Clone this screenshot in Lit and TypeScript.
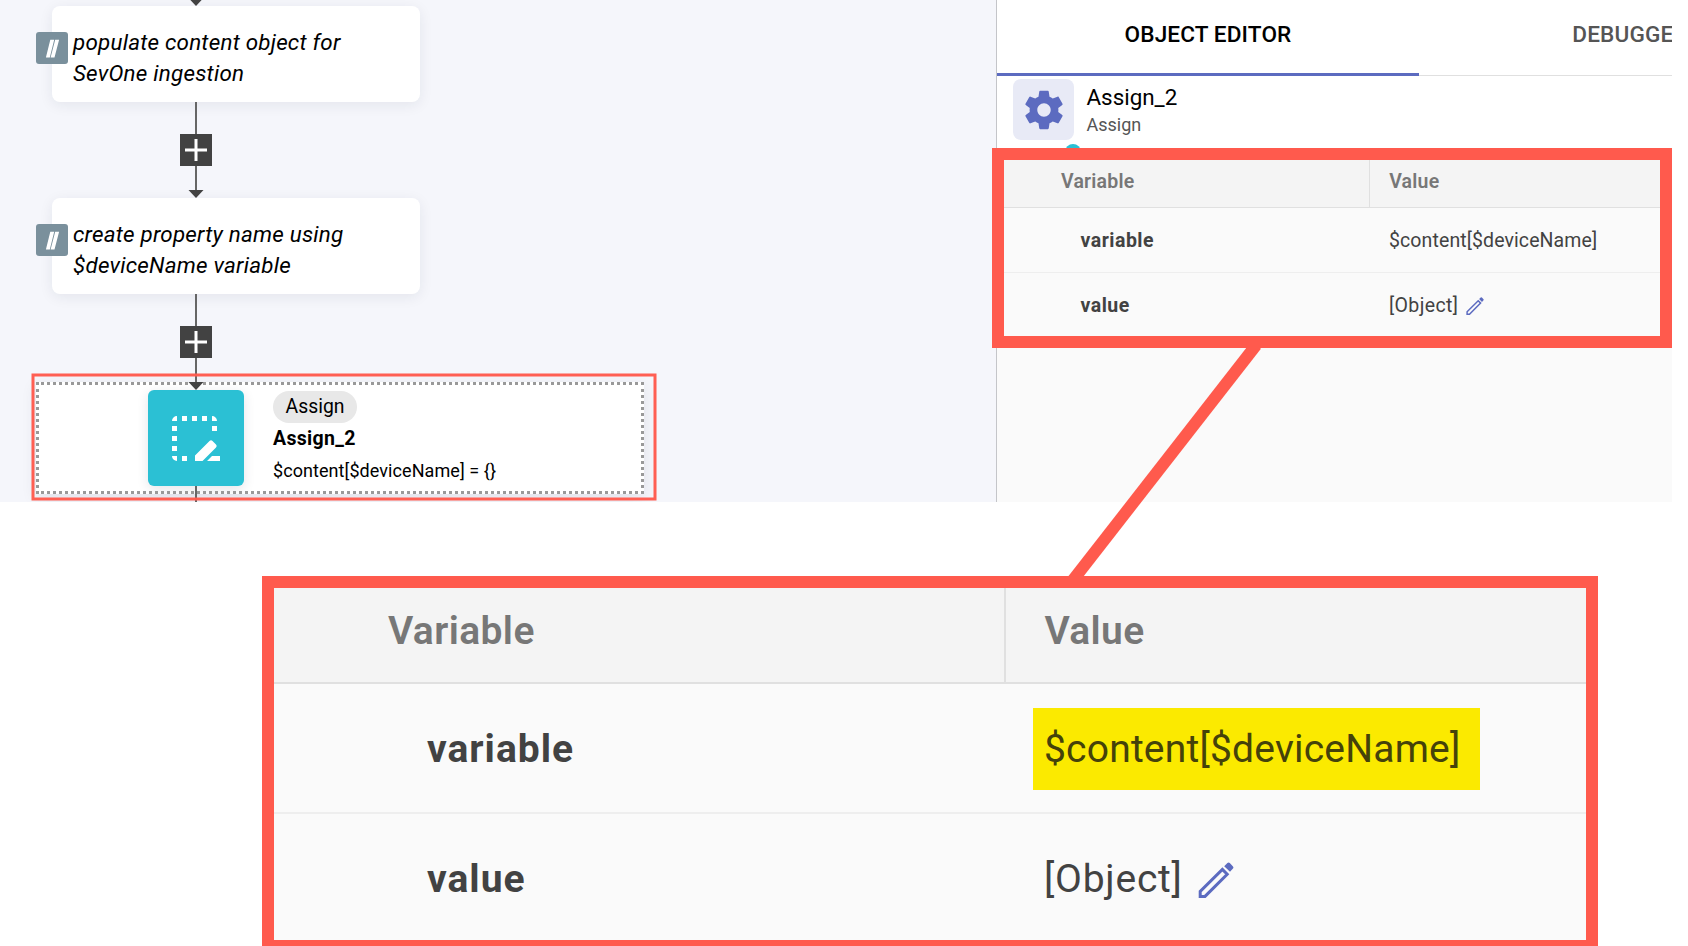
import { LitElement, html, css, svg } from "lit";
import { customElement, property } from "lit/decorators.js";

@customElement("value-table")
class ValueTable extends LitElement {
  @property({ type: Boolean }) marked = false;

  static styles = css`
    :host {
      display: block;
      --u: 1px;
      background: #fafafa;
      color: #424242;
      font: 400 calc(19.5 * var(--u)) / 1 Roboto, sans-serif;
    }
    .row {
      display: grid;
      grid-template-columns: calc(365 * var(--u)) 1fr;
      box-sizing: border-box;
      height: calc(65 * var(--u));
      border-bottom: var(--u) solid #eeeeee;
      align-items: center;
      padding-top: calc(1.2 * var(--u));
    }
    .row:last-child { height: calc(63 * var(--u)); border-bottom: 0; align-items: start; padding-top: calc(23 * var(--u)); }
    .head {
      height: calc(48 * var(--u));
      background: #f4f4f4;
      border-bottom-color: #e0e0e0;
      color: #777;
      font-weight: 600;
      letter-spacing: calc(0.2 * var(--u));
      align-items: stretch;
      padding-top: 0;
    }
    .head > span { padding-top: calc(12 * var(--u)); }
    .head .key { padding-left: calc(57 * var(--u)); }
    .head .val { border-left: var(--u) solid #e0e0e0; }
    .key { padding-left: calc(76.5 * var(--u)); }
    .name { font-weight: 700; letter-spacing: calc(0.5 * var(--u)); }
    .val { padding-left: calc(19.2 * var(--u)); display: flex; align-items: center; }
    .row:not(.head) .val { padding-left: calc(20 * var(--u)); }
    .head .val { align-items: flex-start; }
    .txt { position: relative; white-space: nowrap; letter-spacing: calc(0.1 * var(--u)); }
    .obj { letter-spacing: calc(0.38 * var(--u)); }
    .mark::before {
      content: "";
      position: absolute;
      left: -11px;
      top: -22px;
      width: 447px;
      height: 82px;
      background: #fbea00;
      z-index: -1;
    }
    .mark { z-index: 0; color: #45420a; }
    svg {
      flex: none;
      width: calc(18 * var(--u));
      height: calc(18 * var(--u));
      margin-left: calc(7.5 * var(--u));
    }
  `;

  render() {
    return html`
      <div class="row head"><span class="key">Variable</span><span class="val">Value</span></div>
      <div class="row">
        <span class="key name">variable</span>
        <span class="val"><span class="txt ${this.marked ? "mark" : ""}">$content[$deviceName]</span></span>
      </div>
      <div class="row">
        <span class="key name">value</span>
        <span class="val"><span class="txt obj">[Object]</span>
          <svg viewBox="0 0 18 18">
            <path d="M1.100 17.200V14.700L12.200 3.700L14.600 6.100L3.500 17.200z" fill="none" stroke="#5c6bc0" stroke-width="1.500"/>
            <path d="M13.100 2.100L14.700 .5Q15.300 0 15.900 .5L17.500 2.200Q18 2.800 17.500 3.300L16 4.900z" fill="#5c6bc0"/>
          </svg>
        </span>
      </div>`;
  }
}

@customElement("object-editor")
class ObjectEditor extends LitElement {
  static styles = css`
    :host {
      display: flex;
      flex-direction: column;
      box-sizing: border-box;
      width: 676px;
      height: 502px;
      overflow: hidden;
      border-left: 1px solid #c4c5c9;
      background: #fafafa;
      font-family: Roboto, sans-serif;
    }
    .tabs { display: flex; background: #fff; box-shadow: inset 0 -1px #e0e0e0; flex: none; }
    .tab {
      flex: none;
      box-sizing: border-box;
      width: 422px;
      height: 76px;
      padding-top: 22px;
      text-align: center;
      font-weight: 500;
      font-size: 22.6px;
      line-height: 26px;
      letter-spacing: 0.12px;
      color: #555;
    }
    .on { color: #000; border-bottom: 3px solid #5c6bc0; }
    .info { display: flex; flex: none; height: 84px; background: #fff; padding: 3px 0 0 16px; box-sizing: border-box; position: relative; }
    .gear { width: 61px; height: 61px; border-radius: 8px; background: #e8eaf6; display: grid; place-items: center; padding: 1px 0 0 1px; box-sizing: border-box; }
    .gear svg { width: 46px; height: 46px; fill: #5c6bc0; }
    .names { padding: 4px 0 0 12.5px; }
    .title { font-size: 22.4px; line-height: 28px; color: #000; }
    .sub { font-size: 18px; line-height: 28px; color: #555; }
    .dot { position: absolute; left: 68px; top: 68px; width: 16px; height: 16px; border-radius: 50%; background: #2bc0d4; }
    value-table { width: 663px; padding-left: 7px; }
  `;

  render() {
    return html`
      <div class="tabs"><div class="tab on">OBJECT EDITOR</div><div class="tab">DEBUGGER</div></div>
      <div class="info">
        <div class="gear">
          <svg viewBox="0 0 24 24"><path d="M19.43 12.98c.04-.32.07-.64.07-.98s-.03-.66-.07-.98l2.11-1.65c.19-.15.24-.42.12-.64l-2-3.46c-.12-.22-.39-.3-.61-.22l-2.49 1c-.52-.4-1.08-.73-1.69-.98l-.38-2.65C14.46 2.18 14.25 2 14 2h-4c-.25 0-.46.18-.49.42l-.38 2.65c-.61.25-1.17.59-1.69.98l-2.49-1c-.23-.09-.49 0-.61.22l-2 3.46c-.13.22-.07.49.12.64l2.11 1.65c-.04.32-.07.65-.07.98s.03.66.07.98l-2.11 1.65c-.19.15-.24.42-.12.64l2 3.46c.12.22.39.3.61.22l2.49-1c.52.4 1.08.73 1.69.98l.38 2.65c.03.24.24.42.49.42h4c.25 0 .46-.18.49-.42l.38-2.65c.61-.25 1.17-.59 1.69-.98l2.49 1c.23.09.49 0 .61-.22l2-3.46c.12-.22.07-.49-.12-.64l-2.11-1.65zM12 15.5c-1.93 0-3.5-1.57-3.5-3.5s1.57-3.5 3.5-3.5 3.5 1.57 3.5 3.5-1.57 3.5-3.5 3.5z"/></svg>
        </div>
        <div class="names"><div class="title">Assign_2</div><div class="sub">Assign</div></div>
        <i class="dot"></i>
      </div>
      <value-table></value-table>`;
  }
}

@customElement("flow-canvas")
class FlowCanvas extends LitElement {
  static styles = css`
    :host { display: block; position: relative; width: 996px; height: 502px; overflow: hidden; background: #f5f6fb; font-family: Roboto, sans-serif; color: #000; }
    .links { position: absolute; inset: 0; }
    .note {
      position: absolute; left: 52px; width: 368px; height: 96px; box-sizing: border-box;
      padding: 21px 60px 0 21px; background: #fff; border-radius: 8px;
      box-shadow: 0 3px 14px rgba(30, 40, 70, 0.08);
      font-size: 22.4px; line-height: 31px; font-style: italic; letter-spacing: 0.22px;
    }
    .n1 { top: 6px; }
    .n2 { top: 198px; }
    .tag { position: absolute; left: -16px; top: 26px; width: 32px; height: 32px; border-radius: 3px; background: #7a909c; }
    .sel { position: absolute; left: 36px; top: 382px; width: 608px; height: 112px; background: #fff; box-shadow: 0 4px 14px rgba(30, 40, 70, 0.1); }
    .tile { position: absolute; left: 148px; top: 390px; width: 96px; height: 96px; border-radius: 6px; background: #2bc0d4; box-shadow: 0 3px 12px rgba(30, 40, 70, 0.12); }
    .desc { position: absolute; left: 273px; top: 391px; }
    .pill { display: block; width: max-content; height: 32px; line-height: 32px; border-radius: 16px; background: #e8e8e8; padding: 0 12.5px; font-size: 19.4px; }
    .name { font-weight: 700; font-size: 19.5px; line-height: 32px; letter-spacing: 0.32px; }
    .expr { font-size: 18px; line-height: 31px; letter-spacing: 0.07px; }
  `;

  render() {
    const plus = (y: number) => svg`
      <rect x="180" y=${y} width="32" height="32" fill="#424242"/>
      <path d="M196 ${y + 5}v22M185 ${y + 16}h22" stroke="#fff" stroke-width="3"/>`;
    const tag = html`<svg class="tag" viewBox="0 0 32 32"><path d="M14.300 7.700H18.200L13.800 25.500H9.900zM19.200 7.700H23.100L18.500 25.500H14.600z" fill="#fff"/></svg>`;
    return html`
      <div class="note n1">${tag}populate content object for<br />SevOne ingestion</div>
      <div class="note n2">${tag}create property name using<br />$deviceName variable</div>
      <div class="sel"></div>
      <div class="tile"></div>
      <div class="desc">
        <div class="pill">Assign</div>
        <div class="name">Assign_2</div>
        <div class="expr">$content[$deviceName] = {}</div>
      </div>
      <svg class="links" width="996" height="502">
        <g stroke="#999" stroke-width="3" stroke-dasharray="3 3">
          <path d="M41 383.5H644M41 492.5H644M37.5 389V494M642.5 389V494M36 383.5h3M36 492.5h3"/>
        </g>
        <path d="M196 102V190M196 294V382M196 486V502" stroke="#666" stroke-width="2"/>
        <path d="M188.500 190h15l-7.500 8zM188.500 382h15l-7.500 8zM188.500 -2h15l-7.500 8z" fill="#424242"/>
        ${plus(134)}${plus(326)}
        <g fill="#fff">
          <path d="M172 421a5 5 0 0 1 5-5v5zM182 416h5v5h-5zM192 416h5v5h-5zM202 416h5v5h-5zM212 416a5 5 0 0 1 5 5h-5zM172 426h5v5h-5zM212 426h5v5h-5zM172 436h5v5h-5zM172 446h5v5h-5zM172 456h5v5a5 5 0 0 1-5-5zM182 456h5v5h-5z"/>
          <path d="M195 461v-5.500l14.500-14.500q1.500-1.500 3 0l3.500 3.500q1.500 1.500 0 3l-13.500 13.500zM207 461l5-5h8v5z"/>
        </g>
        <rect x="33" y="375" width="622" height="124" fill="none" stroke="#ff5a4d" stroke-opacity=".97" stroke-width="3"/>
      </svg>`;
  }
}

@customElement("app-root")
class AppRoot extends LitElement {
  static styles = css`
    :host { display: block; position: relative; width: 1688px; height: 946px; overflow: hidden; background: #fff; }
    .top { display: flex; }
    .marks { position: absolute; inset: 0; }
    .zoomed { box-sizing: border-box; width: 1336px; height: 376px; margin: 74px 0 0 262px; border: 12px solid #ff5a4d; }
    .zoomed value-table { --u: 2px; }
  `;

  render() {
    return html`
      <div class="top"><flow-canvas></flow-canvas><object-editor></object-editor></div>
      <div class="zoomed"><value-table marked></value-table></div>
      <svg class="marks" width="1688" height="946" fill="none" stroke="#ff5a4d" stroke-width="12">
        <path d="M1256.200 345L1071.500 582"/>
        <rect x="998" y="154" width="668" height="188"/>
      </svg>`;
  }
}
